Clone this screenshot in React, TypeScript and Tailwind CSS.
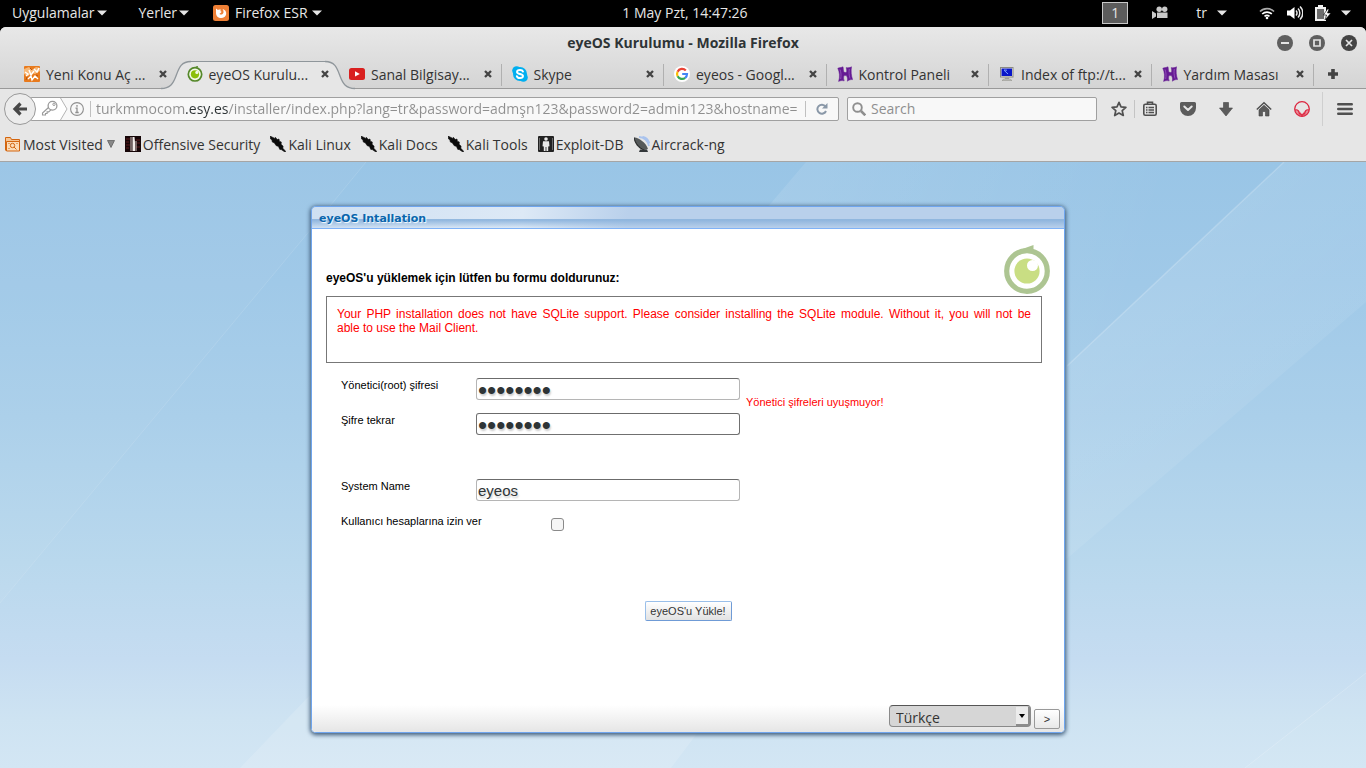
import React from "react";

const Caret = ({ className = "" }: { className?: string }) => (
  <svg className={`shrink-0 ${className}`} width="10" height="6" viewBox="0 0 10 6" fill="#e6e6e6">
    <path d="M0 0.5h10L5 5.5z" />
  </svg>
);

/* FAVICONS */
const ForumIcon = () => (
  <svg width="16" height="16" viewBox="0 0 16 16">
    <rect width="16" height="16" rx="1" fill="#e87a1d" />
    <path d="M0 3 5 1l3 3 4-3 4 1v3l-5 3-3-1-4 3-4-2z" fill="#f7b878" />
    <path d="M1 6l3 2-2 2M5 4l2 5 3-4M10 3l3 3 2-4M4 13l3-3 1 4 3-4 3 3" stroke="#fff" strokeWidth="1.4" fill="none" />
    <path d="M6 2l2 2M3 11l-1 3M12 9l2 1" stroke="#b9540c" strokeWidth="1" />
  </svg>
);

const EyeIcon = () => (
  <svg width="16" height="16" viewBox="0 0 16 16">
    <path d="M8.4 0.2 11 0l-.4 1.6z" fill="#55882a" />
    <circle cx="8" cy="8.3" r="6.7" fill="#f3f8e8" stroke="#55882a" strokeWidth="1.7" />
    <circle cx="8" cy="8.3" r="4.1" fill="#8cbf0a" />
    <circle cx="9.9" cy="6.4" r="1.6" fill="#f3f8e8" />
  </svg>
);

const YoutubeIcon = () => (
  <svg width="16" height="16" viewBox="0 0 16 16">
    <rect y="2" width="16" height="12" rx="2.5" fill="#d9201f" />
    <path d="M6 5.3v5.2L10.8 8z" fill="#fff" />
  </svg>
);

const SkypeIcon = () => (
  <svg width="16" height="16" viewBox="0 0 16 16">
    <circle cx="8" cy="8" r="7" fill="#00aff0" />
    <circle cx="4.6" cy="4.6" r="4.4" fill="#00aff0" />
    <circle cx="11.4" cy="11.4" r="4.4" fill="#00aff0" />
    <path
      d="M11 5.6C10.6 4.4 9.4 4 8 4 6.3 4 5 4.7 5 6c0 2.6 6 1.3 6 4 0 1.4-1.4 2-3 2s-2.8-.6-3.2-1.9"
      fill="none"
      stroke="#fff"
      strokeWidth="1.9"
      strokeLinecap="round"
    />
  </svg>
);

const GoogleIcon = () => (
  <svg width="16" height="16" viewBox="0 0 16 16" fill="none" strokeWidth="2.2">
    <circle cx="8" cy="8" r="8" fill="#fff" />
    <path d="M11.8 4.5A5 5 0 0 0 3.6 5.7" stroke="#ea4335" />
    <path d="M3.6 5.7a5 5 0 0 0 0 4.6" stroke="#fbbc05" />
    <path d="M3.6 10.3a5 5 0 0 0 7.6 1.5" stroke="#34a853" />
    <path d="M11.2 11.8A5 5 0 0 0 13 8H8.2" stroke="#4285f4" />
  </svg>
);

const HostingIcon = () => (
  <svg width="16" height="16" viewBox="0 0 16 16">
    <path
      d="M.8 2.2C2.5 1.6 4.8 1.5 6 .8c.5 2 .3 3.5.7 5 1 .8 2.2.9 3 .2C10 4.5 9.3 3 9.2 1.6c1.8.4 3.8.1 5.3-.8C13.8 5 14.2 9.8 15.6 13.6c-2-.2-3.7.3-5.2 1.6.2-2 .1-3.6-.6-5.2-.8-.6-2.1-.6-3.1 0-.3 1.700-.1 3.200.5 4.900-2-.5-3.800-.4-5.600.5C3.200 11 2.500 6 .8 2.200z"
      fill="#651b93"
      stroke="#651b93"
      strokeWidth=".5"
    />
    <path d="M3 3.500c1.200 3 1.200 6 .7 9.500M12.300 3c-.5 3-.3 6 .7 9.500" stroke="#9a5cc0" strokeWidth=".8" fill="none" />
  </svg>
);

const FtpIcon = () => (
  <svg width="16" height="16" viewBox="0 0 16 16">
    <rect x="1.5" y="1.5" width="12.5" height="9.5" fill="#e9e7dc" stroke="#8b8b84" />
    <rect x="2.5" y="2.5" width="10.5" height="7.5" fill="#0a17c9" />
    <path d="M5 4.200 9 8M5 4l3 .2" stroke="#7fa2ff" />
    <path d="M6 11.500h4v1.500H6z" fill="#a5a59d" />
    <path d="M3 14.500 5 13h6l2 1.500z" fill="#c9c8c0" stroke="#8b8b84" strokeWidth=".5" />
  </svg>
);

/* BOOKMARK ICONS */
const FolderIcon = () => (
  <svg width="16" height="16" viewBox="0 0 16 16" fill="none" stroke="#d3650f">
    <path d="M.5 14.500v-13h5l1 2h8v3" fill="#f7c592" />
    <path d="M1.500 5.500h13v9.500h-13z" fill="#fbdcb8" />
    <circle cx="7.5" cy="9.5" r="2.2" />
    <path d="m9 11 2.500 2.500M3.500 7.500h1M11.500 7.500h1M3.500 12.500h1" />
  </svg>
);

const OffensiveIcon = () => (
  <svg width="16" height="16" viewBox="0 0 16 16">
    <rect width="16" height="16" fill="#160608" />
    <path d="M1 3h4M1 6h3M1 9h4M11 4h4M12 7h3M11 11h4M1 12h3" stroke="#5b1a1d" />
    <path d="M5.500 1h1v14h-1zM10.500 5h1v10h-1z" fill="#cfc0bd" />
    <path d="M7.500 1h2l.5 5v9H7.500z" fill="#f3ecea" />
  </svg>
);

const KaliIcon = () => (
  <svg width="16" height="16" viewBox="0 0 16 16">
    <path
      d="M0 0l5 2.500.4-1.200 1.800 2.300L9 3l.3 2.200 2 .8-.2 2.200 2 2-.3 2 3 3.300-1 .4-3.500-2.300-1.500-.2L8.500 10.500 6 9.500 4.500 7 2.300 6 2 4 .6 3z"
      fill="#0b0b0b"
      stroke="#0b0b0b"
      strokeWidth=".6"
    />
  </svg>
);

const ExploitIcon = () => (
  <svg width="16" height="16" viewBox="0 0 16 16">
    <rect width="16" height="16" rx="1" fill="#222" />
    <circle cx="8" cy="3" r="1.8" fill="#e9e9e9" />
    <path d="M5 5.300h6l.5 5-1.300.2V15H8.400v-4h-.8v4H5.800v-4.500l-1.300-.2z" fill="#e9e9e9" />
    <path d="M1.500 2v12M14.500 2v12" stroke="#6b6b6b" />
  </svg>
);

const AircrackIcon = () => (
  <svg width="16" height="16" viewBox="0 0 16 16">
    <path d="M5 1c5 0 9 4 10 9M8.500.8C12 1.500 14.500 4 15.500 7.500" stroke="#a9c3ee" strokeWidth="1.8" fill="none" />
    <path d="M0 1.500C3 .5 12 6 14 13l-4 1C4 13 0 7 0 1.500z" fill="#55595a" />
    <path d="M0 1.500C1 7 5 12 10 14" stroke="#222" fill="none" />
    <path d="M6 13.500h7l1 2.500H5z" fill="#33373a" />
  </svg>
);

/* TOOLBAR ICONS */
const toolButtons = [
  {
    name: "Library",
    icon: (
      <svg width="16" height="16" viewBox="0 0 16 16" fill="none" stroke="#505050" strokeWidth="1.6">
        <rect x="1.8" y="3.3" width="12.4" height="11" rx="1.5" />
        <path d="M5.500 3V1.200h5V3" />
        <path d="M4 6.500h1.500M4 9h1.500M4 11.500h1.500M6.500 6.500H12M6.500 9H12M6.500 11.500H12" strokeWidth="1.3" />
      </svg>
    ),
  },
  {
    name: "Pocket",
    icon: (
      <svg width="16" height="16" viewBox="0 0 16 16">
        <path d="M1.500 1h13A1.500 1.500 0 0 1 16 2.500V7A8 8 0 0 1 0 7V2.500A1.500 1.500 0 0 1 1.500 1z" fill="#5c5c5c" />
        <path d="M4.300 5.500 8 9l3.700-3.500" fill="none" stroke="#e6e6e6" strokeWidth="2" strokeLinecap="round" strokeLinejoin="round" />
      </svg>
    ),
  },
  {
    name: "Downloads",
    icon: (
      <svg width="16" height="16" viewBox="0 0 16 16">
        <path d="M5.500 1.500h5V7h4L8 15 1.500 7h4z" fill="#5c5c5c" stroke="#444" strokeWidth=".6" strokeLinejoin="round" />
      </svg>
    ),
  },
  {
    name: "Home",
    icon: (
      <svg width="16" height="16" viewBox="0 0 16 16">
        <path d="M.8 8.500 8 1.800l7.200 6.700" fill="none" stroke="#505050" strokeWidth="1.5" />
        <path d="M3 8.800 8 4.200l5 4.600V15H9.500v-4.500h-3V15H3z" fill="#5c5c5c" stroke="#444" strokeWidth=".6" />
      </svg>
    ),
  },
  {
    name: "Download helper",
    icon: (
      <svg width="16" height="16" viewBox="0 0 16 16">
        <path d="M1 9h3.500L8 13l3.500-4H15a7 7 0 0 1-14 0z" fill="#e88b98" />
        <circle cx="8" cy="8" r="7.3" fill="none" stroke="#dc2740" strokeWidth="1.3" />
        <path d="M1 9c3-1 4 1 4.500 4.500M15 9c-3-1-4 1-4.500 4.500M5.500 12 8 14.500l2.500-2.500" fill="none" stroke="#dc2740" strokeWidth="1.1" />
      </svg>
    ),
  },
];

const tabs = [
  { title: "Yeni Konu Aç ...", icon: <ForumIcon /> },
  { title: "eyeOS Kurulu...", icon: <EyeIcon />, active: true },
  { title: "Sanal Bilgisay...", icon: <YoutubeIcon /> },
  { title: "Skype", icon: <SkypeIcon /> },
  { title: "eyeos - Googl...", icon: <GoogleIcon /> },
  { title: "Kontrol Paneli", icon: <HostingIcon /> },
  { title: "Index of ftp://t...", icon: <FtpIcon /> },
  { title: "Yardım Masası", icon: <HostingIcon /> },
];

const bookmarks = [
  { title: "Offensive Security", icon: <OffensiveIcon /> },
  { title: "Kali Linux", icon: <KaliIcon /> },
  { title: "Kali Docs", icon: <KaliIcon /> },
  { title: "Kali Tools", icon: <KaliIcon /> },
  { title: "Exploit-DB", icon: <ExploitIcon /> },
  { title: "Aircrack-ng", icon: <AircrackIcon /> },
];

const TopBar = () => (
  <div className="grid h-[27px] grid-cols-[1fr_auto_1fr] items-center bg-black pb-0.5 text-[14px] text-[#e6e6e6]">
    <div className="flex items-center pl-3">
      <button className="flex items-center gap-0.5">
        Uygulamalar <Caret />
      </button>
      <button className="ml-8 flex items-center gap-0.5">
        Yerler <Caret />
      </button>
      <button className="ml-6 flex items-center gap-0.5">
        <svg className="mr-1" width="16" height="16" viewBox="0 0 16 16">
          <rect width="16" height="16" rx="2.5" fill="#ee7f35" />
          <path d="M3 3.500 5 5c1-.6 2-.6 3-.3C7 5.500 7.500 6.500 8.500 6.500c0 1.500-2 1.500-2 2.500 1.500 1.300 3.700.3 4-1.500.2-1.500-.3-2.500-1-3.500 2.500.5 4 2.500 3.700 5C12.800 11.600 10.700 13 8.200 13 5.200 13 3 11 3 8z" fill="#fff" />
        </svg>
        Firefox ESR <Caret className="ml-0.5" />
      </button>
    </div>
    <span className="pl-1">1 May Pzt, 14:47:26</span>
    <div className="flex items-center justify-end pr-[15px]">
      <button className="h-[22px] w-[26px] border border-[#c8c8c8] bg-[#5c5c5c] leading-5">1</button>
      <svg className="ml-6" width="16" height="16" viewBox="0 0 16 16" fill="#c9c9c9">
        <circle cx="7.2" cy="4.2" r="2.7" />
        <circle cx="12.7" cy="4.2" r="2.7" />
        <path d="M5 7.500h10.500V13H5zM0 6l4 2.500v3L0 14z" />
      </svg>
      <button className="ml-7 flex items-center gap-2.5">
        tr <Caret />
      </button>
      <svg className="ml-8" width="16" height="16" viewBox="0 0 16 16" fill="none" strokeWidth="1.7">
        <path d="M1 6.500a10 10 0 0 1 14 0" stroke="#aaa" />
        <path d="M3.200 9a7 7 0 0 1 9.600 0M5.500 11.400a4 4 0 0 1 5 0" stroke="#fff" />
        <circle cx="8" cy="13" r="1.3" fill="#fff" />
      </svg>
      <svg className="ml-3" width="16" height="16" viewBox="0 0 16 16" fill="none" stroke="#e9e9e9" strokeWidth="1.5">
        <path d="M0 5.500h3L7.500 2v12L3 10.500H0z" fill="#fff" stroke="none" />
        <path d="M9 5.500a3.500 3.500 0 0 1 0 5M11 3.500a6.500 6.500 0 0 1 0 9M13 1.500a9 9 0 0 1 0 13" />
      </svg>
      <svg className="ml-3" width="16" height="16" viewBox="0 0 16 16">
        <path d="M3 0h5v2h3v14H0V2h3z" fill="#f2f2f2" />
        <path d="M2 4h7v10H2z" fill="#6d6d6d" />
        <path d="m12.500 4-4 6h3L10 15l6-7h-3.500l1.500-4z" fill="#fff" stroke="#000" strokeWidth=".6" />
      </svg>
      <Caret className="ml-2.5" />
    </div>
  </div>
);

const WindowTitle = () => (
  <div className="grid h-[33px] grid-cols-[1fr_auto_1fr] items-center px-[9px] pb-0.5">
    <h1 className="col-start-2 text-[14px] font-bold text-[#2e3436]">eyeOS Kurulumu - Mozilla Firefox</h1>
    <div className="flex justify-end gap-4">
      <button aria-label="Minimize">
        <svg width="16" height="16" viewBox="0 0 16 16">
          <circle cx="8" cy="8" r="8" fill="#5f5f5f" />
          <path d="M4 8h8" stroke="#e4e4e4" strokeWidth="2" />
        </svg>
      </button>
      <button aria-label="Maximize">
        <svg width="16" height="16" viewBox="0 0 16 16">
          <circle cx="8" cy="8" r="8" fill="#5f5f5f" />
          <path d="M5 5h6v6H5z" fill="none" stroke="#e4e4e4" strokeWidth="1.7" />
        </svg>
      </button>
      <button aria-label="Close window">
        <svg width="16" height="16" viewBox="0 0 16 16">
          <circle cx="8" cy="8" r="8" fill="#444" />
          <path d="m5 5 6 6M11 5l-6 6" stroke="#e4e4e4" strokeWidth="1.7" />
        </svg>
      </button>
    </div>
  </div>
);

const ActiveTabShape = () => (
  <div className="absolute -inset-x-4 top-0 -bottom-px flex">
    <svg className="shrink-0" width="30" height="30" viewBox="0 0 30 30">
      <path d="M0 30v-1.500C9 28.500 12 24 15 16S20 1.500 30 1.500V30z" fill="#e6e6e6" />
      <path d="M0 28.500C9 28.500 12 24 15 16S20 1.500 30 1.500" fill="none" stroke="#8f969b" strokeWidth="1.3" />
    </svg>
    <div className="mt-px flex-1 border-t border-[#8f969b] bg-[#e6e6e6]" />
    <svg className="shrink-0" width="30" height="30" viewBox="0 0 30 30">
      <path d="M30 30v-1.500C21 28.500 18 24 15 16S10 1.500 0 1.500V30z" fill="#e6e6e6" />
      <path d="M30 28.500C21 28.500 18 24 15 16S10 1.500 0 1.500" fill="none" stroke="#8f969b" strokeWidth="1.3" />
    </svg>
  </div>
);

const TabStrip = () => (
  <div className="flex h-[29px] border-b border-[#999] pl-3.5 pr-7">
    {tabs.map((tab, i) => (
      <div key={tab.title} className={`relative flex min-w-0 flex-1 items-center px-2.5 ${tab.active ? "z-10" : ""}`}>
        {tab.active && <ActiveTabShape />}
        <button className="relative flex min-w-0 flex-1 items-center gap-1.5 text-left text-[14px] whitespace-nowrap text-[#333]">
          <span className="shrink-0">{tab.icon}</span>
          {tab.title}
        </button>
        <button className="relative" aria-label={`Close ${tab.title}`}>
          <svg width="8" height="8" viewBox="0 0 8 8">
            <path d="m1 1 6 6M7 1 1 7" stroke="#444" strokeWidth="2.3" />
          </svg>
        </button>
        {i > 1 && <span className="absolute top-1 right-0 h-[22px] w-px bg-[#b0b0b0]" />}
      </div>
    ))}
    <button className="ml-3.5 self-center" aria-label="New tab">
      <svg width="10" height="10" viewBox="0 0 10 10">
        <path d="M3.200 0h3.600v3.200H10v3.600H6.800V10H3.200V6.800H0V3.200h3.200z" fill="#444" />
      </svg>
    </button>
  </div>
);

const NavBar = () => (
  <div className="flex h-10 items-center pr-[13px] pl-1">
    <button
      aria-label="Back"
      className="z-10 flex size-8 shrink-0 items-center justify-center rounded-full border border-[#999] bg-[#ececec]"
    >
      <svg width="16" height="16" viewBox="0 0 16 16">
        <path d="M8.500 2.500 3 8l5.500 5.500M3.500 8H15" fill="none" stroke="#484848" strokeWidth="3.2" />
      </svg>
    </button>
    <div className="-ml-1.5 flex h-6 min-w-0 flex-1 items-center rounded-xs border border-[#a0a0a0] bg-[#f8f8f8]">
      <svg className="shrink-0" width="37" height="22" viewBox="0 0 37 22" fill="none">
        <path d="M0 0h29l7 11-7 11H0z" fill="#fff" />
        <path d="m29.500 0 6.500 11-6.500 11" stroke="#b5b5b5" />
        <circle cx="21.5" cy="7.8" r="4.4" stroke="#9a9a9a" strokeWidth="1.3" />
        <circle cx="23" cy="6.3" r="1.2" stroke="#9a9a9a" />
        <path d="m17.500 9.500-6 5.500v2h3v-1.500h1.600v-1.600h1.600l2.500-2.200" stroke="#9a9a9a" strokeWidth="1.1" />
      </svg>
      <svg className="ml-0.5 shrink-0" width="14" height="14" viewBox="0 0 14 14" fill="none" stroke="#8f8f8f">
        <circle cx="7" cy="7" r="6.4" strokeWidth="1.1" />
        <path d="M7 3v1.700M5.500 6.200H7V10.500M5.300 10.500h3.400" strokeWidth="1.3" />
      </svg>
      <span className="ml-1.5 h-4 w-px shrink-0 bg-[#c0c0c0]" />
      <input
        aria-label="Address"
        className="ml-[5px] min-w-0 flex-1 bg-[linear-gradient(90deg,#8f8f8f_88px,#2e3436_88px,#2e3436_132px,#8f8f8f_132px)] bg-clip-text pb-0.5 text-[14px] text-transparent outline-none"
        defaultValue="turkmmocom.esy.es/installer/index.php?lang=tr&password=admşn123&password2=admin123&hostname="
      />
      <span className="ml-1 h-4 w-px shrink-0 bg-[#c0c0c0]" />
      <button aria-label="Reload" className="mr-2.5 ml-2.5 shrink-0">
        <svg width="12" height="12" viewBox="0 0 12 12">
          <path d="M9.500 3.500A4.500 4.500 0 1 0 10 8" fill="none" stroke="#8a98a8" strokeWidth="2" />
          <path d="M11.500 0v5.500H6z" fill="#8a98a8" />
        </svg>
      </button>
    </div>
    <label className="ml-2 flex h-6 w-[250px] items-center rounded-xs border border-[#a0a0a0] bg-[#f8f8f8] pl-1">
      <svg width="14" height="14" viewBox="0 0 14 14" fill="none" stroke="#8f8f8f">
        <circle cx="5.5" cy="5.5" r="4.3" strokeWidth="1.9" />
        <path d="m9 9 4.300 4.300" strokeWidth="2.6" />
      </svg>
      <input
        aria-label="Search"
        placeholder="Search"
        className="ml-[5px] min-w-0 flex-1 bg-transparent pb-0.5 text-[14px] outline-none placeholder:text-[#8f8f8f]"
      />
    </label>
    <button aria-label="Bookmark this page" className="ml-3.5">
      <svg width="16" height="16" viewBox="0 0 16 16">
        <path d="m8 1.300 2 4.500 4.900.5-3.700 3.300 1.100 4.900L8 12l-4.300 2.500 1.100-4.900L1.100 6.300 6 5.800z" fill="none" stroke="#505050" strokeWidth="1.7" strokeLinejoin="round" />
      </svg>
    </button>
    <span className="ml-[7px] h-[18px] w-px bg-[#c4c4c4]" />
    <div className="ml-[7px] flex gap-[22px]">
      {toolButtons.map((b) => (
        <button key={b.name} aria-label={b.name}>
          {b.icon}
        </button>
      ))}
    </div>
    <span className="ml-3 h-[34px] w-px bg-[#cfcfcf]" />
    <button aria-label="Menu" className="ml-3.5">
      <svg width="16" height="16" viewBox="0 0 16 16">
        <path d="M1.300 3.300h13.400M1.300 8h13.400M1.300 12.700h13.400" stroke="#505050" strokeWidth="2.6" strokeLinecap="round" />
      </svg>
    </button>
  </div>
);

const Bookmarks = () => (
  <nav className="flex h-[33px] items-center gap-2.5 border-b border-[#a5a5a5] pb-0.5 pl-[5px] text-[14px] text-[#333]">
    <button className="flex items-center">
      <FolderIcon />
      <span className="ml-0.5">Most Visited</span>
      <svg className="ml-1" width="8" height="8" viewBox="0 0 8 8">
        <path d="M.5.500h7L4 7.500z" fill="#888" stroke="#555" strokeWidth=".7" />
      </svg>
    </button>
    {bookmarks.map((b) => (
      <a key={b.title} href="#" className="flex items-center gap-0.5 whitespace-nowrap">
        {b.icon}
        {b.title}
      </a>
    ))}
  </nav>
);

/* Sky gradient with the diagonal light streaks */
const Wallpaper = () => (
  <svg className="absolute inset-0 h-full w-full" viewBox="0 0 1366 606" preserveAspectRatio="none">
    <defs>
      <linearGradient id="sky" x1="0" y1="0" x2="0" y2="1">
        <stop offset="0" stopColor="#99c5e6" />
        <stop offset="0.2" stopColor="#a0c9e8" />
        <stop offset="0.42" stopColor="#aacfea" />
        <stop offset="0.66" stopColor="#b9d8ed" />
        <stop offset="0.82" stopColor="#c5dcf1" />
        <stop offset="0.92" stopColor="#cee3f2" />
        <stop offset="1" stopColor="#d3e6f4" />
      </linearGradient>
      {/* light side of an edge, fading away from it */}
      <linearGradient id="glow" gradientUnits="userSpaceOnUse" x1="1150" y1="130" x2="1250" y2="240">
        <stop offset="0" stopColor="#fff" stopOpacity="0.1" />
        <stop offset="1" stopColor="#fff" stopOpacity="0.07" />
      </linearGradient>
      <linearGradient id="topGlow" gradientUnits="userSpaceOnUse" x1="780" y1="0" x2="1150" y2="110">
        <stop offset="0" stopColor="#fff" stopOpacity="0.1" />
        <stop offset="1" stopColor="#fff" stopOpacity="0" />
      </linearGradient>
    </defs>
    <rect width="1366" height="606" fill="url(#sky)" />
    <path d="M0 0h366L312 66 0 441z" fill="#fff" opacity="0.03" />
    <path d="M366 0 312 66 0 441" stroke="#fff" strokeOpacity="0.12" fill="none" />
    <path d="M806 0h478L1067 204 900 360H500z" fill="url(#topGlow)" />
    <path d="M1284 0h82v140L1070 394 900 540V360l167-156z" fill="url(#glow)" />
    <path d="M1284 0 1067 204" stroke="#fff" strokeOpacity="0.2" strokeWidth="1.5" />
    <path d="M310 533 240 606h431l90-120z" fill="#fff" opacity="0.14" />
    <path d="M1366 511v95h-121z" fill="#fff" opacity="0.04" />
    <path d="M1366 511 1245 606" stroke="#fff" strokeOpacity="0.2" />
  </svg>
);

const fieldClass =
  "h-[22px] w-full rounded-[3px] border border-t-[#6b6b6b] bg-white px-px text-[#2e3436] outline-none [text-shadow:1px_2px_2px_#ccc]";

const InstallForm = () => (
  <form className="flex flex-1 flex-col bg-white pl-3.5" onSubmit={(e) => e.preventDefault()}>
    <div className="flex items-end justify-between pt-4 pr-3.5">
      <h2 className="mb-2 text-[12px] leading-4 font-bold text-black">eyeOS'u yüklemek için lütfen bu formu doldurunuz:</h2>
      <svg width="46" height="49" viewBox="0 0 46 49">
        <path d="M11 6.500 29.500 0v7z" fill="#adc592" />
        <circle cx="23" cy="26" r="20.3" fill="#fff" stroke="#adc592" strokeWidth="5.2" />
        <circle cx="23" cy="26" r="12.6" fill="#c9de83" />
        <circle cx="28.5" cy="20.5" r="5.5" fill="#fff" />
      </svg>
    </div>
    <div className="mt-0.5 mr-[22px] min-h-[67px] border border-[#777] p-2.5 text-justify text-[12px] leading-[14px] text-[#f00]">
      Your PHP installation does not have SQLite support. Please consider installing the SQLite module. Without it, you will
      not be <span className="whitespace-nowrap">able to use</span> the Mail Client.
    </div>

    <div className="mt-[15px] grid grid-cols-[135px_264px_1fr] gap-y-[13px] pl-[15px] text-[11px] leading-[14px] text-black">
      <label htmlFor="password">Yönetici(root) şifresi</label>
      <input id="password" type="password" defaultValue="admin123" className={`${fieldClass} border-[#b5b5b5] pt-[3px] text-[26px]`} />
      <p className="row-span-2 pt-[17px] pl-1.5 text-[#f00]">Yönetici şifreleri uyuşmuyor!</p>
      <label htmlFor="password2">Şifre tekrar</label>
      <input id="password2" type="password" defaultValue="admin123" className={`${fieldClass} border-[#707070] pt-[3px] text-[26px]`} />
      <label htmlFor="system" className="mt-[31px]">
        System Name
      </label>
      <input id="system" type="text" defaultValue="eyeos" className={`${fieldClass} mt-[31px] border-[#b5b5b5] text-[15px]`} />
      <label htmlFor="accounts" className="col-start-1 whitespace-nowrap">
        Kullanıcı hesaplarına izin ver
      </label>
      <input
        id="accounts"
        type="checkbox"
        className="mt-1 ml-[75px] size-[13px] appearance-none rounded-[3px] border border-[#8a8a8a] bg-[#f5f5f5]"
      />
    </div>

    <button className="mt-[70px] mr-3.5 h-5 w-[87px] self-center rounded-xs border border-[#9abfe9] border-r-[#6f9bd6] border-b-[#6f9bd6] bg-linear-to-b from-white to-[#e2e2e2] text-[11px] text-[#333]">
      eyeOS'u Yükle!
    </button>

    <div className="mt-auto -ml-3.5 flex h-[27px] items-end justify-end gap-[3px] bg-linear-to-b from-white to-[#e6e6e6] pr-1 pb-[3px]">
      <div className="relative mb-0.5 w-[142px]">
        <select
          aria-label="Language"
          className="block h-[22px] w-full appearance-none rounded-[4px] border border-[#8a8a8a] border-t-[#555] bg-[#d6d6d6] pt-[3px] pl-1.5 font-['Open_Sans','Noto_Sans',sans-serif] text-[14px] leading-[18px] text-[#333]"
        >
          <option>Türkçe</option>
        </select>
        <span className="pointer-events-none absolute top-0.5 right-px flex h-[19px] w-3.5 items-center justify-center border-r-2 border-b-2 border-[#8c8c8c] bg-[#ececec]">
          <svg width="6" height="4" viewBox="0 0 6 4">
            <path d="M0 0h6L3 4z" fill="#000" />
          </svg>
        </span>
      </div>
      <button className="h-5 w-[26px] rounded-xs border border-[#999] bg-linear-to-b from-white to-[#e8e8e8] text-[11px] text-[#333]">
        &gt;
      </button>
    </div>
  </form>
);

export default function App() {
  return (
    <div className="flex min-h-screen flex-col bg-black font-['Open_Sans','Noto_Sans',sans-serif]">
      <TopBar />

      {/* BROWSER CHROME */}
      <header className="rounded-t-md bg-[#e6e6e6]">
        <div className="rounded-t-md bg-linear-to-b from-[#e8e8e8] to-[#d4d4d4]">
          <WindowTitle />
          <TabStrip />
        </div>
        <NavBar />
        <Bookmarks />
      </header>

      {/* PAGE */}
      <main className="relative flex flex-1 justify-center pt-11 pb-[35px] pl-2.5 font-['Liberation_Sans',Arial,sans-serif]">
        <Wallpaper />
        <section className="relative flex min-h-[527px] w-full max-w-[754px] flex-col overflow-hidden rounded-[5px] border border-[#6fa5ee] shadow-[0_1px_4px_1px_#3d5a78]">
          <div className="h-[22px] border-b border-[#7fb2f7] bg-[linear-gradient(180deg,transparent_55%,#8db4dd_60%,transparent),linear-gradient(100deg,#cfe0f2_0,#dde9f6_28%,#b9d0eb_42%)] pl-[7px] font-['DejaVu_Sans',Verdana,sans-serif] text-[11px] leading-6 font-bold text-[#0a66ad] [text-shadow:1px_1px_1px_#fff]">
            eyeOS Intallation
          </div>
          <InstallForm />
        </section>
      </main>
    </div>
  );
}
